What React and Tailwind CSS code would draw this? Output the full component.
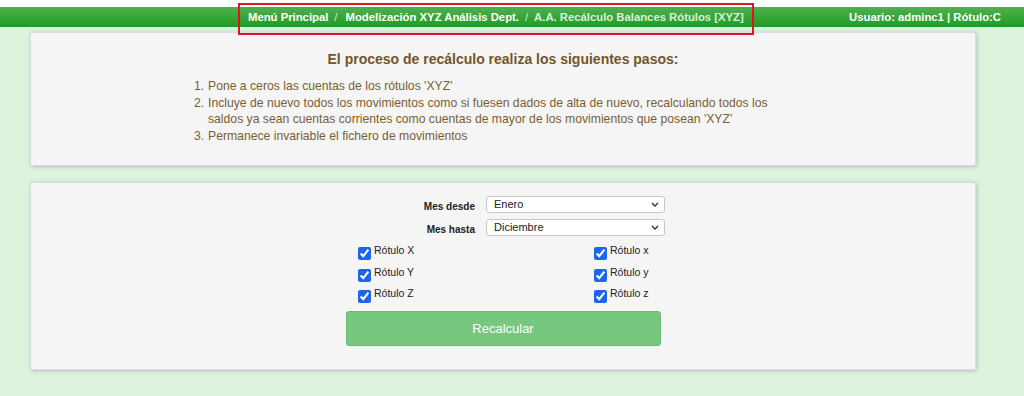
// Recálculo de balances por rótulos
// Pantalla con cabecera verde, explicación del proceso y formulario de recálculo.

import { useState } from 'react';

const pasos = [
  <>Pone a ceros las cuentas de los rótulos 'XYZ'</>,
  <>
    Incluye de nuevo todos los movimientos como si fuesen dados de alta de nuevo, recalculando todos los
    <br />
    saldos ya sean cuentas corrientes como cuentas de mayor de los movimientos que posean 'XYZ'
  </>,
  <>Permanece invariable el fichero de movimientos</>,
];

const meses = [
  'Enero', 'Febrero', 'Marzo', 'Abril', 'Mayo', 'Junio',
  'Julio', 'Agosto', 'Septiembre', 'Octubre', 'Noviembre', 'Diciembre',
];

const MesSelect = ({ label, value, onChange }) => (
  <div className="flex h-[17px] items-center justify-center gap-[11px]">
    <label className="w-[134px] text-right text-[10px] font-bold leading-[12px] text-[#222] pt-[4px]">{label}</label>
    <div className="relative h-[17px] w-[179px]">
      <select
        value={value}
        onChange={(e) => onChange(e.target.value)}
        className="block h-[17px] w-full appearance-none rounded-[3px] border border-[#c8c8c8] bg-white pl-[7px] text-[11px] leading-[15px] text-[#222] outline-none"
      >
        {meses.map((m) => (
          <option key={m}>{m}</option>
        ))}
      </select>
      {/* flecha del desplegable */}
      <svg className="pointer-events-none absolute right-[6px] top-[6px]" width="8" height="5" viewBox="0 0 8 5">
        <path d="M1 1l3 3 3-3" fill="none" stroke="#333" strokeWidth="1.4" />
      </svg>
    </div>
  </div>
);

const App = () => {
  const [desde, setDesde] = useState('Enero');
  const [hasta, setHasta] = useState('Diciembre');
  const [rotulos, setRotulos] = useState({ X: true, x: true, Y: true, y: true, Z: true, z: true });

  const toggle = (k) => setRotulos((prev) => ({ ...prev, [k]: !prev[k] }));

  return (
    <div className="min-h-[396px] bg-[#def3de]" style={{ fontFamily: '"Liberation Sans", Arial, sans-serif' }}>
      {/* Cabecera */}
      <div className="relative bg-white pt-[7px]">
        <div className="flex h-[20px] items-center bg-gradient-to-b from-[#4cb24c] to-[#1f9a22] text-[11.3px] font-bold">
          <div className="flex items-center pl-[248px] text-white">
            <span>Menú Principal</span>
            <span className="px-[6px] font-normal text-[#cfe9cf]">/</span>
            <span className="pl-[2px]">Modelización XYZ Análisis Dept.</span>
            <span className="px-[6px] font-normal text-[#cfe9cf]">/</span>
            <span className="text-[#dcefdc]">A.A. Recálculo Balances Rótulos [XYZ]</span>
          </div>
          <div className="ml-auto pr-[23px] text-white">Usuario: adminc1 | Rótulo:C</div>
        </div>
        {/* marca roja sobre la miga de pan */}
        <div className="pointer-events-none absolute left-[238px] top-[3px] h-[32px] w-[516px] border-2 border-[#e3131b]" />
      </div>

      <div className="w-[946px] ml-[30px] pt-[5px] pb-[26px]">
        {/* Explicación */}
        <div className="rounded-[2px] border border-[#d9dbe2] bg-[#f5f5f5] pt-[17px] pb-[21px] shadow-[1px_1px_4px_rgba(90,100,120,0.35)]">
          <h2 className="text-center text-[14px] font-bold leading-[18px] text-[#735628]">
            El proceso de recálculo realiza los siguientes pasos:
          </h2>
          <ol className="ml-[163px] mt-[10px] text-[12.2px] leading-[16.5px] text-[#7a5d31]">
            {pasos.map((p, i) => (
              <li key={i} className="flex">
                <span className="w-[14px] shrink-0">{i + 1}.</span>
                <span>{p}</span>
              </li>
            ))}
          </ol>
        </div>

        {/* Formulario */}
        <div className="mt-[16px] rounded-[2px] border border-[#d9dbe2] bg-[#f5f5f5] pt-[13px] pb-[23px] shadow-[1px_1px_4px_rgba(90,100,120,0.35)]">
          <div className="flex flex-col gap-[6px]">
            <MesSelect label="Mes desde" value={desde} onChange={setDesde} />
            <MesSelect label="Mes hasta" value={hasta} onChange={setHasta} />
          </div>

          <div className="ml-[327px] mt-[7px] grid w-[472px] grid-cols-2 gap-y-[4.5px]">
            {['X', 'x', 'Y', 'y', 'Z', 'z'].map((k) => (
              <label key={k} className="flex items-start gap-[3px] text-[10.5px] leading-[15px] text-[#222]">
                <input
                  type="checkbox"
                  checked={rotulos[k]}
                  onChange={() => toggle(k)}
                  className="mt-[4px] h-[13px] w-[13px] accent-[#1d64f0]"
                />
                <span>Rótulo {k}</span>
              </label>
            ))}
          </div>

          <button className="mx-auto mt-[8px] block h-[35px] w-[315px] rounded-[3px] border border-[#6cbb74] bg-[#77c77f] text-[13px] text-white hover:opacity-90">
            Recalcular
          </button>
        </div>
      </div>
    </div>
  );
};

export default App;
